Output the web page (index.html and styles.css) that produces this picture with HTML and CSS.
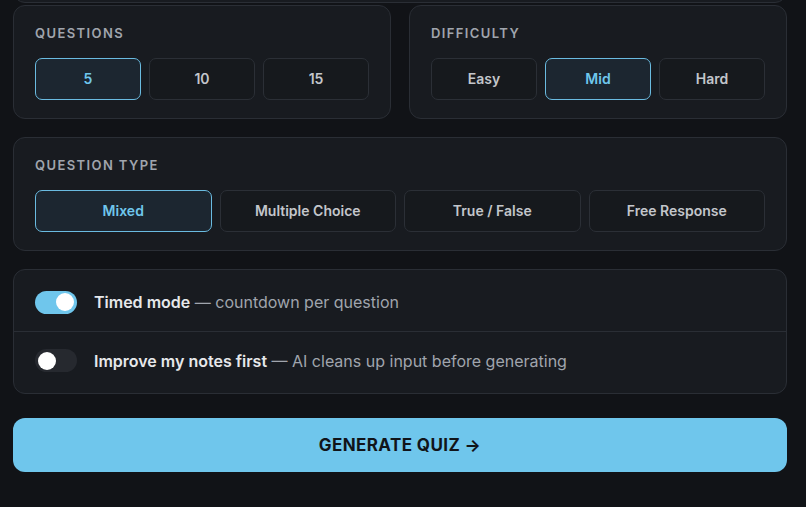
FILE: index.html
```html
<!DOCTYPE html>
<html lang="en">
<head>
  <meta charset="UTF-8">
  <title>Quiz Settings</title>
  <link rel="stylesheet" href="styles.css">
</head>
<body>
  <div class="page">
    <div class="card card-top"></div>

    <div class="row-two">
      <div class="card">
        <div class="label">Questions</div>
        <div class="options three">
          <button class="opt active">5</button>
          <button class="opt">10</button>
          <button class="opt">15</button>
        </div>
      </div>
      <div class="card">
        <div class="label">Difficulty</div>
        <div class="options three">
          <button class="opt">Easy</button>
          <button class="opt active">Mid</button>
          <button class="opt">Hard</button>
        </div>
      </div>
    </div>

    <div class="card">
      <div class="label">Question Type</div>
      <div class="options four">
        <button class="opt active">Mixed</button>
        <button class="opt">Multiple Choice</button>
        <button class="opt">True / False</button>
        <button class="opt">Free Response</button>
      </div>
    </div>

    <div class="card toggles">
      <div class="toggle-row">
        <span class="switch on"><span class="knob"></span></span>
        <span class="toggle-text"><strong>Timed mode</strong> — countdown per question</span>
      </div>
      <div class="toggle-row">
        <span class="switch"><span class="knob"></span></span>
        <span class="toggle-text"><strong>Improve my notes first</strong> — AI cleans up input before generating</span>
      </div>
    </div>

    <button class="generate">Generate Quiz →</button>
  </div>
</body>
</html>
```

FILE: styles.css
```css
:root {
  --bg: #111317;
  --card-bg: #181b20;
  --card-border: #2a2e35;
  --opt-bg: #16191d;
  --opt-border: #2b2f36;
  --text: #e6e8eb;
  --muted: #a0a5ad;
  --accent: #6fc6ec;
}

* {
  box-sizing: border-box;
}

body {
  margin: 0;
  background: var(--bg);
  font-family: Inter, "Noto Sans", sans-serif;
  color: var(--text);
}

.page {
  padding: 0 19px 35px 13px;
  display: flex;
  flex-direction: column;
  gap: 18px;
}

.card {
  background: var(--card-bg);
  border: 1px solid var(--card-border);
  border-radius: 12px;
  padding: 19px 21px 18px;
}

.card-top {
  height: 40px;
  margin-top: -37px;
  margin-bottom: -16px;
  padding: 0;
}

.row-two {
  display: grid;
  grid-template-columns: 1fr 1fr;
  gap: 18px;
}

.label {
  font-size: 13px;
  line-height: 16px;
  font-weight: 600;
  letter-spacing: 1.4px;
  text-transform: uppercase;
  color: var(--muted);
  margin-bottom: 17px;
}

.options {
  display: grid;
  gap: 8px;
}

.options.three {
  grid-template-columns: repeat(3, 1fr);
}

.options.four {
  grid-template-columns: repeat(4, 1fr);
}

.opt {
  height: 42px;
  background: var(--opt-bg);
  border: 1px solid var(--opt-border);
  border-radius: 7px;
  color: #c3c6cb;
  font-family: inherit;
  font-size: 14px;
  font-weight: 600;
  padding-bottom: 2px;
  cursor: pointer;
}

.opt.active {
  background: #1c2630;
  border: 1.5px solid #6abbe0;
  color: var(--accent);
}

.toggles {
  padding: 3px 0 4px;
}

.toggle-row {
  display: flex;
  align-items: center;
  gap: 17px;
  height: 58px;
  padding: 0 21px;
}

.toggle-row + .toggle-row {
  border-top: 1px solid var(--card-border);
}

.switch {
  width: 42px;
  height: 23px;
  border-radius: 12px;
  background: #26292f;
  display: flex;
  align-items: center;
  padding: 0 3px;
  flex-shrink: 0;
}

.switch.on {
  background: var(--accent);
  justify-content: flex-end;
}

.knob {
  width: 18px;
  height: 18px;
  border-radius: 50%;
  background: #fff;
}

.toggle-text {
  font-size: 16px;
  color: var(--muted);
}

.toggle-text strong {
  color: var(--text);
  font-weight: 600;
}

.generate {
  margin-top: 6px;
  height: 54px;
  border: none;
  border-radius: 12px;
  background: var(--accent);
  color: #111419;
  font-family: inherit;
  font-size: 17px;
  font-weight: 700;
  letter-spacing: 0.4px;
  text-transform: uppercase;
  cursor: pointer;
}
```
